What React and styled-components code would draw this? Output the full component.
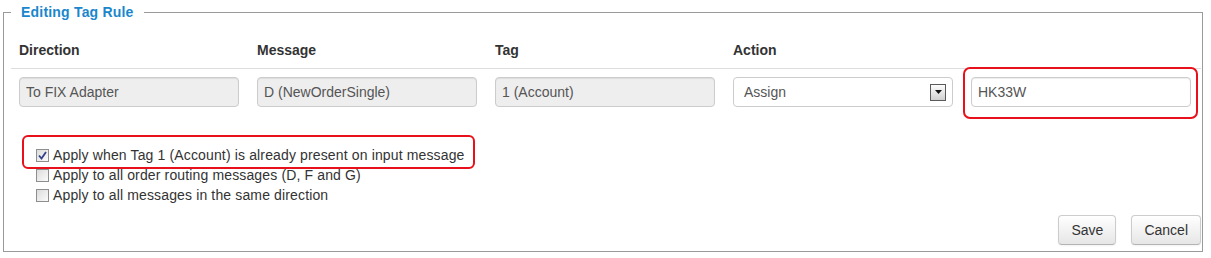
import React from 'react'
import styled, { createGlobalStyle } from 'styled-components'

const GlobalStyle = createGlobalStyle`
  body {
    margin: 0;
    background: #fff;
    font-family: "Liberation Sans", Arial, sans-serif;
    font-size: 14px;
    color: #333;
  }
`

const Page = styled.div`
  padding: 2px 0 0 3px;
`

const Fieldset = styled.fieldset`
  box-sizing: border-box;
  width: 1200px;
  height: 250px;
  margin: 0;
  padding: 10px 0 6px 7px;
  border: 1px solid #9a9a9a;
  display: flex;
  flex-direction: column;
`

const Legend = styled.legend`
  padding: 0 10px;
  font-size: 14px;
  font-weight: bold;
  line-height: 20px;
  letter-spacing: 0.2px;
  color: #1a87cc;
`

const Grid = styled.div`
  display: grid;
  grid-template-columns: repeat(5, 238px);
`

const HeadCell = styled.div`
  padding: 8px;
  line-height: 20px;
  font-weight: bold;
  color: #333;
  border-bottom: 1px solid #ddd;
`

const Cell = styled.div`
  position: relative;
  padding: 8px;

  ${p => p.$marked && `
    &::after {
      content: '';
      position: absolute;
      top: -2px;
      left: 0;
      right: 3px;
      bottom: -4px;
      border: 2px solid #e8101a;
      border-radius: 7px;
      pointer-events: none;
    }
  `}
`

const Field = styled.div`
  box-sizing: border-box;
  width: 220px;
  height: 30px;
  padding: 4px 6px;
  border: 1px solid #ccc;
  border-radius: 4px;
  line-height: 20px;
  color: #555;
  background: ${p => (p.$disabled ? '#eee' : '#fff')};
  box-shadow: inset 0 1px 1px rgba(0, 0, 0, 0.075);
`

const Select = styled(Field)`
  display: flex;
  align-items: center;
  justify-content: space-between;
  padding: 4px 6px 4px 10px;
  box-shadow: none;
`

const Arrow = styled.span`
  box-sizing: border-box;
  width: 16px;
  height: 17px;
  border: 1px solid #5a5a5a;
  background: linear-gradient(#fdfdfd, #cfcfcf);
  display: flex;
  align-items: center;
  justify-content: center;
`

const Options = styled.div`
  margin: 30px 0 0 25px;
  display: flex;
  flex-direction: column;
  align-items: flex-start;
`

const Option = styled.label`
  position: relative;
  display: inline-flex;
  align-items: center;
  gap: 4px;
  line-height: 20px;
  letter-spacing: 0.14px;
  color: #333;

  ${p => p.$marked && `
    &::after {
      content: '';
      position: absolute;
      top: -10px;
      left: -14px;
      right: -10px;
      bottom: -4px;
      border: 2px solid #e8101a;
      border-radius: 6px;
      pointer-events: none;
    }
  `}
`

const Box = styled.span`
  box-sizing: border-box;
  width: 13px;
  height: 13px;
  border: 1px solid #8e8e8e;
  background: linear-gradient(135deg, #dcdcdc, #fbfbfb);
  display: flex;
  align-items: center;
  justify-content: center;
`

const Actions = styled.div`
  margin-top: auto;
  display: flex;
  justify-content: flex-end;
  gap: 15px;
  padding-right: 1px;
`

const Button = styled.button`
  height: 30px;
  padding: 4px 12px;
  font-family: inherit;
  font-size: 14px;
  line-height: 20px;
  color: #333;
  background: linear-gradient(#ffffff, #e6e6e6);
  border: 1px solid #ccc;
  border-bottom-color: #b3b3b3;
  border-radius: 4px;
  box-shadow: inset 0 1px 0 rgba(255, 255, 255, 0.2), 0 1px 2px rgba(0, 0, 0, 0.05);
  cursor: pointer;
`

const Check = () => (
  <svg width="9" height="9" viewBox="0 0 9 9">
    <path d="M1 4.5 L3.5 7.5 L8 1" fill="none" stroke="#33408a" strokeWidth="1.8" />
  </svg>
)

const columns = ['Direction', 'Message', 'Tag', 'Action', '']

const options = [
  { text: 'Apply when Tag 1 (Account) is already present on input message', checked: true },
  { text: 'Apply to all order routing messages (D, F and G)', checked: false },
  { text: 'Apply to all messages in the same direction', checked: false },
]

export default function App() {
  return (
    <Page>
      <GlobalStyle />
      <Fieldset>
        <Legend>Editing Tag Rule</Legend>
        <Grid>
          {columns.map((c, i) => (
            <HeadCell key={i}>{c || '\u00a0'}</HeadCell>
          ))}
          <Cell><Field $disabled>To FIX Adapter</Field></Cell>
          <Cell><Field $disabled>D (NewOrderSingle)</Field></Cell>
          <Cell><Field $disabled>1 (Account)</Field></Cell>
          <Cell>
            <Select>
              Assign
              <Arrow>
                <svg width="7" height="4" viewBox="0 0 7 4">
                  <path d="M0 0 H7 L3.5 4 Z" fill="#111" />
                </svg>
              </Arrow>
            </Select>
          </Cell>
          <Cell $marked><Field>HK33W</Field></Cell>
        </Grid>

        <Options>
          {options.map((o, i) => (
            <Option key={i} $marked={o.checked}>
              <Box>{o.checked && <Check />}</Box>
              {o.text}
            </Option>
          ))}
        </Options>

        <Actions>
          <Button>Save</Button>
          <Button>Cancel</Button>
        </Actions>
      </Fieldset>
    </Page>
  )
}
